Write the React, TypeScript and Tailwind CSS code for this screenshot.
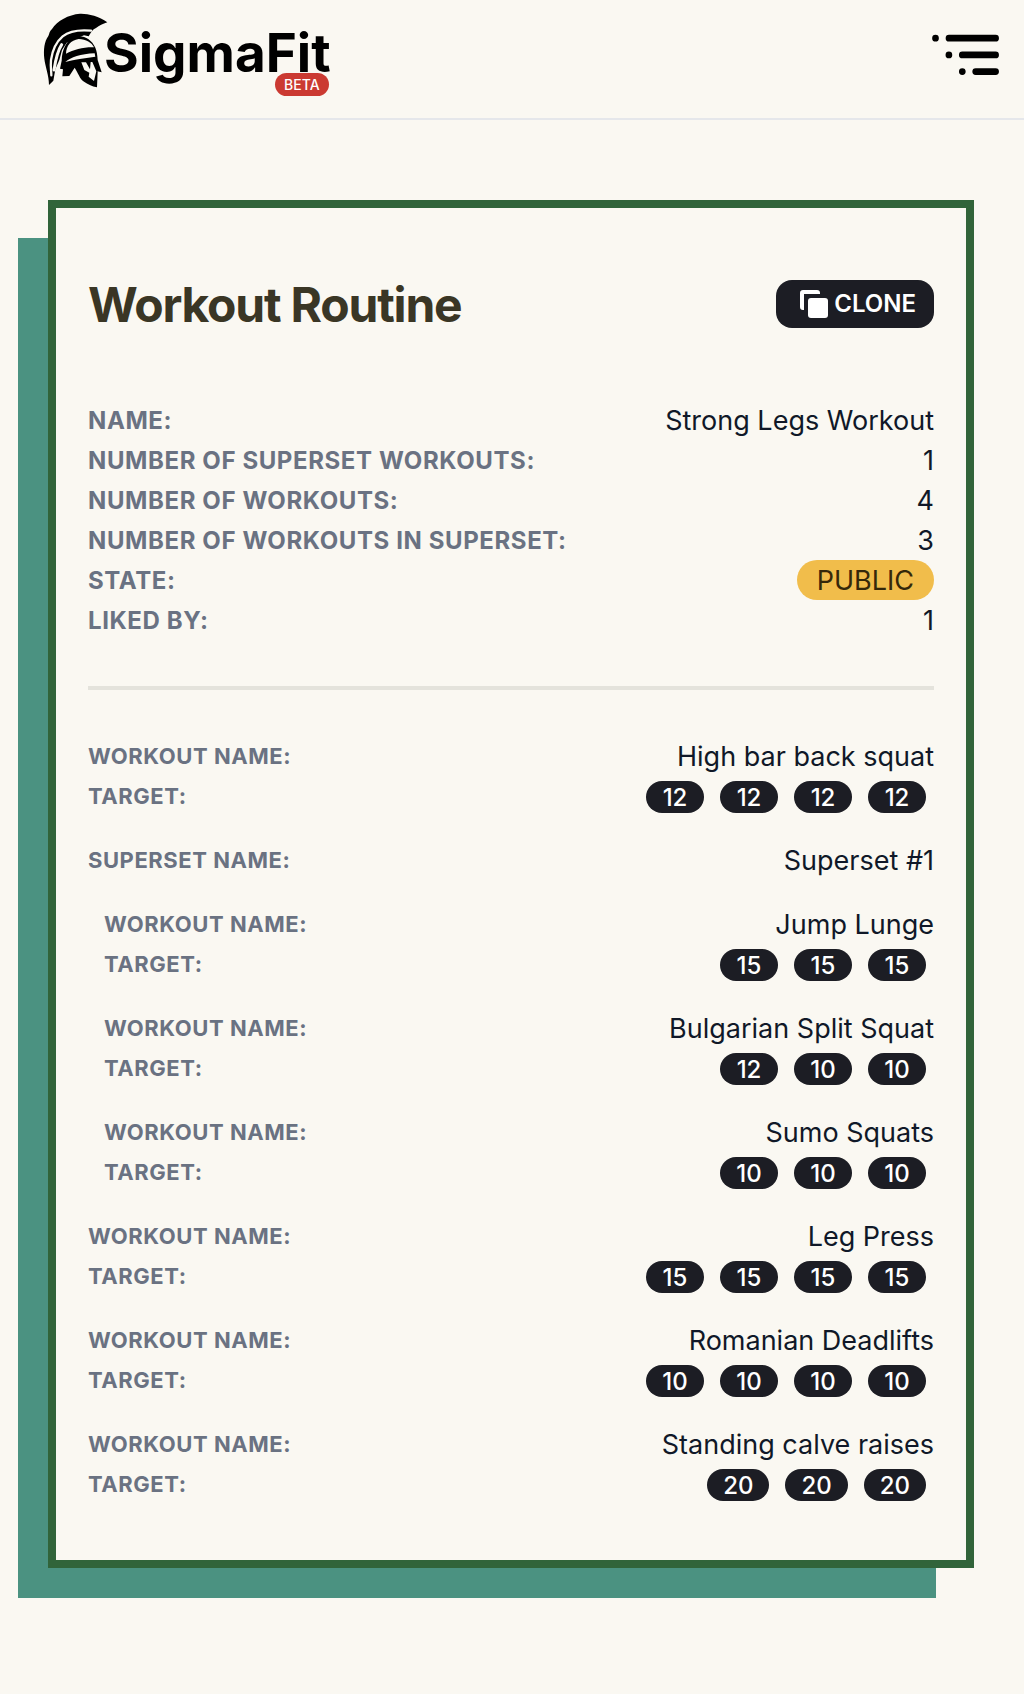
import React from "react";

type Exercise = { name: string; targets: number[] };

const summary: { label: string; value: string; badge?: boolean }[] = [
  { label: "Name:", value: "Strong Legs Workout" },
  { label: "Number of superset workouts:", value: "1" },
  { label: "Number of workouts:", value: "4" },
  { label: "Number of workouts in superset:", value: "3" },
  { label: "State:", value: "PUBLIC", badge: true },
  { label: "Liked by:", value: "1" },
];

const opening: Exercise[] = [{ name: "High bar back squat", targets: [12, 12, 12, 12] }];

const superset: Exercise[] = [
  { name: "Jump Lunge", targets: [15, 15, 15] },
  { name: "Bulgarian Split Squat", targets: [12, 10, 10] },
  { name: "Sumo Squats", targets: [10, 10, 10] },
];

const closing: Exercise[] = [
  { name: "Leg Press", targets: [15, 15, 15, 15] },
  { name: "Romanian Deadlifts", targets: [10, 10, 10, 10] },
  { name: "Standing calve raises", targets: [20, 20, 20] },
];

function Helmet() {
  return (
    <svg viewBox="39 39 195 228" className="h-[76px] w-[65px] shrink-0" aria-hidden="true">
      <path d="M232 67C207 48 172 40 150 41C115 44 82 62 66 87C58 94 58 102 55 108C43 124 40 150 43 176C46 202 57 225 57 255L70 242L76 208L88 180L96 150L110 128L162 106L176 109C182 98 188 88 198 84C208 76 218 72 232 67Z" />
      <path d="M183 92C150 89 118 93 98 109C78 126 67 152 63 180C61 200 64 212 64 226" fill="none" stroke="#faf8f2" strokeWidth="7" strokeLinecap="round" />
      <path d="M95 134C83 152 77 178 72 210" fill="none" stroke="#faf8f2" strokeWidth="9" strokeLinecap="round" />
      <path d="M95 182C96 150 108 122 133 111C158 103 184 116 196 143C200 152 202 164 203 180L215 217L199 213L190 196L203 215L201 262C186 260 172 252 160 244C150 237 144 218 134 203L118 228L97 229L99 208L90 206Z" />
      <path d="M108 161C109 137 122 121 146 117C168 117 186 128 192 142C160 141 132 149 108 161Z" fill="#faf8f2" />
      <path d="M106 186C122 172 152 162 194 160L196 170L149 177C130 179 118 184 106 186Z" fill="#faf8f2" />
      <path d="M154 187L168 187L180 208L182 186L187 186L199 214L192 243L176 230L178 218L163 210Z" fill="#faf8f2" />
    </svg>
  );
}

function MenuIcon() {
  return (
    <svg viewBox="0 0 68 42" className="h-[42px] w-[68px]" fill="none" stroke="black" strokeWidth="6.7" strokeLinecap="round" aria-hidden="true">
      <path d="M4.5 4.2h.01M18 4.2h46.6M17.9 20.9h.01M31.3 20.9h33.3M31.3 37.6h.01M44.7 37.6h19.9" />
    </svg>
  );
}

function CloneIcon() {
  return (
    <svg viewBox="0 0 28 28" className="size-7" fill="currentColor" aria-hidden="true">
      <path d="M20 4V3a3 3 0 0 0-3-3H3a3 3 0 0 0-3 3v14a3 3 0 0 0 3 3h1V4z" />
      <rect x="8" y="8" width="20" height="20" rx="3" />
    </svg>
  );
}

function ExerciseRows({ name, targets, nested }: Exercise & { nested?: boolean }) {
  return (
    <dl className={nested ? "pl-4" : ""}>
      <div className="flex items-center justify-between">
        <dt className="text-[22px] leading-10 font-bold tracking-wide text-gray-500 uppercase">Workout name:</dt>
        <dd className="pt-0.5 text-[27px] leading-[38px]">{name}</dd>
      </div>
      <div className="flex items-center justify-between">
        <dt className="text-[22px] leading-10 font-bold tracking-wide text-gray-500 uppercase">Target:</dt>
        <dd className="flex gap-4 pt-0.5 pr-2">
          {targets.map((reps, i) => (
            <span key={i} className="min-w-[58px] rounded-full bg-[#1c1d24] px-4 pt-0.5 text-center text-2xl leading-[30px] font-medium text-white">
              {reps}
            </span>
          ))}
        </dd>
      </div>
    </dl>
  );
}

export default function App() {
  return (
    <div className="min-h-screen bg-[#faf8f2] font-['Inter',sans-serif] text-gray-900">
      <header className="flex h-30 items-start justify-between border-b-2 border-gray-200 pr-[25px] pl-[43px]">
        <a href="#" className="flex items-start pt-[13px] text-black">
          <Helmet />
          <span className="-ml-1 flex flex-col items-end pt-5">
            <span className="text-[53px] leading-10 font-bold">SigmaFit</span>
            <span className="mr-0.5 rounded-full bg-[#cb3a32] px-[9px] text-sm leading-[23px] font-medium text-white">BETA</span>
          </span>
        </a>
        <button type="button" aria-label="Open menu" className="mt-[34px]">
          <MenuIcon />
        </button>
      </header>

      <main className="pt-20 pr-[50px] pb-[126px] pl-12">
        <div className="relative">
          <div className="absolute top-[38px] right-[38px] -bottom-[30px] -left-[30px] bg-[#4b9281]" />
          <section className="relative border-8 border-[#31643a] bg-[#faf8f2] px-8 pt-16 pb-14">
            <div className="flex items-center justify-between">
              <h1 className="pt-0.5 text-5xl leading-[62px] font-bold tracking-tight text-[#3a3625]">Workout Routine</h1>
              <button type="button" className="flex h-12 items-center gap-1.5 rounded-2xl bg-[#1c1d24] pr-[18px] pl-6 text-2xl font-semibold text-white">
                <CloneIcon />
                CLONE
              </button>
            </div>

            <dl className="mt-16">
              {summary.map((row) => (
                <div key={row.label} className="flex items-center justify-between">
                  <dt className="pt-0.5 text-2xl leading-[38px] font-bold tracking-wide text-gray-500 uppercase">{row.label}</dt>
                  <dd className={row.badge ? "rounded-full bg-[#f1bd4b] px-5 pt-0.5 text-[27px] leading-[38px] text-[#35280a]" : "pt-0.5 text-[27px] leading-[38px]"}>
                    {row.value}
                  </dd>
                </div>
              ))}
            </dl>

            <hr className="my-[46px] border-t-4 border-[#e4e3dc]" />

            <div className="flex flex-col gap-6">
              {opening.map((e) => (
                <ExerciseRows key={e.name} {...e} />
              ))}
              <dl className="flex items-center justify-between">
                <dt className="text-[22px] leading-10 font-bold tracking-wide text-gray-500 uppercase">Superset name:</dt>
                <dd className="pt-0.5 text-[27px] leading-[38px]">Superset #1</dd>
              </dl>
              {superset.map((e) => (
                <ExerciseRows key={e.name} {...e} nested />
              ))}
              {closing.map((e) => (
                <ExerciseRows key={e.name} {...e} />
              ))}
            </div>
          </section>
        </div>
      </main>
    </div>
  );
}
